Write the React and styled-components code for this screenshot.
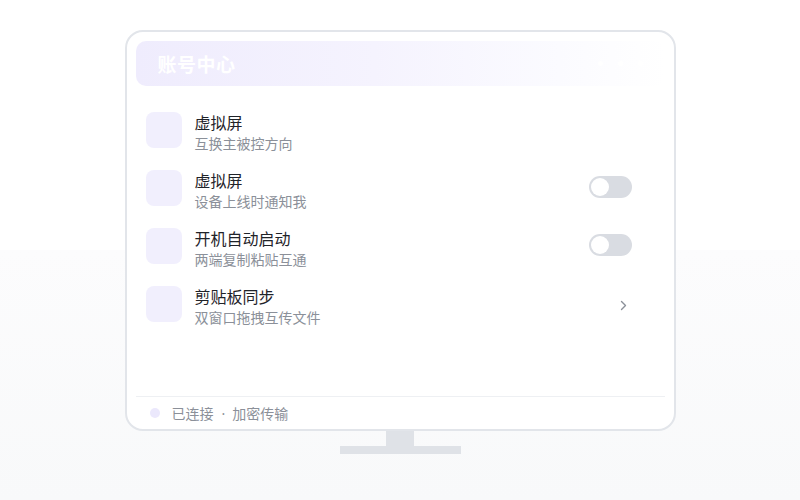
import React from "react";
import styled, { createGlobalStyle } from "styled-components";

const Global = createGlobalStyle`
  html, body { margin: 0; padding: 0; }
  body {
    width: 800px;
    height: 500px;
    overflow: hidden;
    background: linear-gradient(180deg, #ffffff 0px, #ffffff 250px, #fcfcfd 250px, #f8f9fa 500px);
    font-family: "Noto Sans CJK SC", "Noto Sans", sans-serif;
  }
`;

const Stage = styled.div`
  display: flex;
  flex-direction: column;
  align-items: center;
  padding-top: 30px;
`;

const Monitor = styled.div`
  box-sizing: border-box;
  width: 551px;
  height: 401px;
  border: 2px solid #e2e5ea;
  border-radius: 18px;
  background: #ffffff;
  padding: 9px 9px 6px;
  display: flex;
  flex-direction: column;
`;

const Header = styled.div`
  height: 45px;
  flex: none;
  border-radius: 10px;
  background: linear-gradient(90deg, #efecfd 0%, #f5f3fe 45%, #fbfbff 80%, #ffffff 100%);
  display: flex;
  align-items: center;
  justify-content: space-between;
  padding: 0 20px 0 22px;
`;

const HeaderTitle = styled.span`
  color: #ffffff;
  font-size: 19px;
  font-weight: 600;
  letter-spacing: 0.5px;
`;

const Dots = styled.div`
  display: flex;
  gap: 15px;
  margin-right: 2px;
`;

const Dot = styled.span`
  width: 5px;
  height: 5px;
  border-radius: 50%;
  background: rgba(255, 255, 255, 0.9);
`;

const List = styled.div`
  margin-top: 26px;
  display: flex;
  flex-direction: column;
  gap: 17px;
`;

const Row = styled.div`
  display: flex;
  align-items: flex-start;
  padding: 0 33px 0 10px;
`;

const IconBox = styled.div`
  width: 36px;
  height: 36px;
  flex: none;
  border-radius: 8px;
  background: #f1effd;
`;

const Texts = styled.div`
  flex: 1;
  margin-left: 13px;
  margin-top: -1px;
  display: flex;
  flex-direction: column;
`;

const Title = styled.div`
  font-size: 16px;
  line-height: 22px;
  color: #1f2329;
`;

const Sub = styled.div`
  font-size: 14px;
  line-height: 20px;
  color: #8b9099;
`;

const Toggle = styled.div`
  width: 43px;
  height: 22px;
  margin-top: 6px;
  border-radius: 11px;
  background: #d9dce2;
  position: relative;
  flex: none;
`;

const Knob = styled.span`
  position: absolute;
  left: 2px;
  top: 2px;
  width: 18px;
  height: 18px;
  border-radius: 50%;
  background: #ffffff;
`;

const Chevron = styled.svg`
  margin-top: 14px;
  margin-right: 5px;
  flex: none;
`;

const Footer = styled.div`
  margin-top: auto;
  border-top: 1px solid #eef0f3;
  padding: 6px 14px 0;
  display: flex;
  align-items: center;
  gap: 12px;
  height: 20px;
`;

const StatusDot = styled.span`
  width: 10px;
  height: 10px;
  border-radius: 50%;
  background: #ebe8fc;
`;

const FooterText = styled.span`
  font-size: 14px;
  line-height: 20px;
  color: #8b9099;
`;

const Sep = styled.span`
  font-family: "Noto Sans", sans-serif;
  margin: 0 7px 0 8px;
`;

const Neck = styled.div`
  width: 28px;
  height: 15px;
  background: #dfe2e7;
`;

const Base = styled.div`
  width: 121px;
  height: 8px;
  background: #dfe2e7;
`;

const items = [
  { title: "虚拟屏", sub: "互换主被控方向", action: null },
  { title: "虚拟屏", sub: "设备上线时通知我", action: "toggle" },
  { title: "开机自动启动", sub: "两端复制粘贴互通", action: "toggle" },
  { title: "剪贴板同步", sub: "双窗口拖拽互传文件", action: "chevron" },
];

export default function App() {
  return (
    <>
      <Global />
      <Stage>
        <Monitor>
          <Header>
            <HeaderTitle>账号中心</HeaderTitle>
            <Dots>
              <Dot />
              <Dot />
              <Dot />
            </Dots>
          </Header>
          <List>
            {items.map((it, i) => (
              <Row key={i}>
                <IconBox />
                <Texts>
                  <Title>{it.title}</Title>
                  <Sub>{it.sub}</Sub>
                </Texts>
                {it.action === "toggle" && (
                  <Toggle>
                    <Knob />
                  </Toggle>
                )}
                {it.action === "chevron" && (
                  <Chevron width="7" height="11" viewBox="0 0 7 11">
                    <path d="M1.5 1.5 L5.5 5.5 L1.5 9.5" fill="none" stroke="#8b9099" strokeWidth="1.4" strokeLinecap="round" strokeLinejoin="round" />
                  </Chevron>
                )}
              </Row>
            ))}
          </List>
          <Footer>
            <StatusDot />
            <FooterText>
              已连接<Sep>·</Sep>加密传输
            </FooterText>
          </Footer>
        </Monitor>
        <Neck />
        <Base />
      </Stage>
    </>
  );
}
